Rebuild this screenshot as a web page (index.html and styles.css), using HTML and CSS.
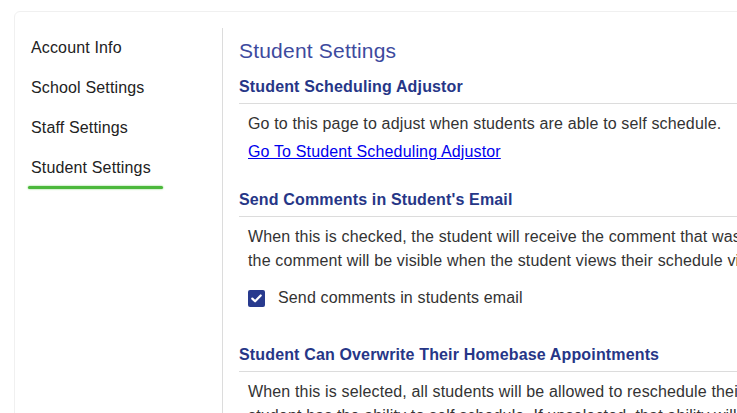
FILE: index.html
```html
<!DOCTYPE html>
<html lang="en">
<head>
  <meta charset="UTF-8">
  <title>Student Settings</title>
  <meta name="viewport" content="width=device-width, initial-scale=1.0">
<link rel="stylesheet" href="styles.css">
</head>
<body>

  <div class="card">
    <ul class="side-nav">
      <li>Account Info</li>
      <li>School Settings</li>
      <li>Staff Settings</li>
      <li class="active">Student Settings</li>
    </ul>

    <div class="main">
      <h1>Student Settings</h1>

      <div class="section">
        <h3>Student Scheduling Adjustor</h3>
        <div class="section-body">
          <p>Go to this page to adjust when students are able to self schedule.</p>
          <a class="page-link" href="#">Go To Student Scheduling Adjustor</a>
        </div>
      </div>

      <div class="section">
        <h3>Send Comments in Student's Email</h3>
        <div class="section-body">
          <p>When this is checked, the student will receive the comment that was entered for their appointment in their email. If unchecked,<br>the comment will be visible when the student views their schedule via the student portal.</p>
          <label class="check-row">
            <span class="checkbox">
              <svg width="11" height="9" viewBox="0 0 11 9"><path d="M1.3 4.6 L4.1 7.3 L9.7 1.5" fill="none" stroke="#fff" stroke-width="2.2" stroke-linecap="round" stroke-linejoin="round"/></svg>
            </span>
            Send comments in students email
          </label>
        </div>
      </div>

      <div class="section">
        <h3>Student Can Overwrite Their Homebase Appointments</h3>
        <div class="section-body">
          <p>When this is selected, all students will be allowed to reschedule their homebase appointments as long as the<br>student has the ability to self schedule. If unselected, that ability will be turned off for every student.</p>
        </div>
      </div>
    </div>
  </div>

</body>
</html>
```

FILE: styles.css
```css
body {
	margin: 0;
	font-family: "Liberation Sans", Arial, sans-serif;
	background-color: #fff;
	color: #333;
	letter-spacing: 0.15px;
	overflow: hidden;
}

.card {
	display: flex;
	width: 1200px;
	min-height: 500px;
	margin: 11px 0 0 14px;
	padding-top: 16px;
	border: 1px solid #f0f0f0;
	border-radius: 6px;
	background: white;
}

.side-nav {
	list-style: none;
	width: 191px;
	margin: 0;
	padding: 0 0 0 16px;
	border-right: 1px solid #dcdcdc;
}

.side-nav li {
	position: relative;
	height: 40px;
	line-height: 40px;
	font-size: 16px;
	color: #222;
}

.side-nav li.active::after {
	content: "";
	position: absolute;
	left: -3px;
	bottom: -1px;
	width: 135px;
	height: 3px;
	border-radius: 2px;
	background: #4cb83c;
	box-shadow: 0 0 2px #6fcf5f;
}

.main {
	flex: 1;
	padding: 1px 0 0 16px;
}

h1 {
	margin: 10px 0 14px;
	font-size: 21px;
	line-height: 24px;
	font-weight: normal;
	letter-spacing: 0.2px;
	color: #3d4a9e;
}

.section {
	margin-bottom: 26px;
}

h3 {
	margin: 0;
	padding-bottom: 6px;
	border-bottom: 1px solid #dcdcdc;
	font-size: 16px;
	line-height: 20px;
	font-weight: bold;
	color: #263687;
}

.section-body {
	padding: 8px 0 0 9px;
	font-size: 16px;
	line-height: 24px;
}

.section-body p {
	margin: 0;
}

.page-link {
	display: inline-block;
	margin-top: 4px;
	color: #0000ee;
}

.check-row {
	display: flex;
	align-items: center;
	height: 24px;
	margin: 13px 0 35px;
	gap: 13px;
}

.checkbox {
	display: flex;
	align-items: center;
	justify-content: center;
	width: 17px;
	height: 17px;
	border-radius: 2px;
	background: #283a8e;
}
```
